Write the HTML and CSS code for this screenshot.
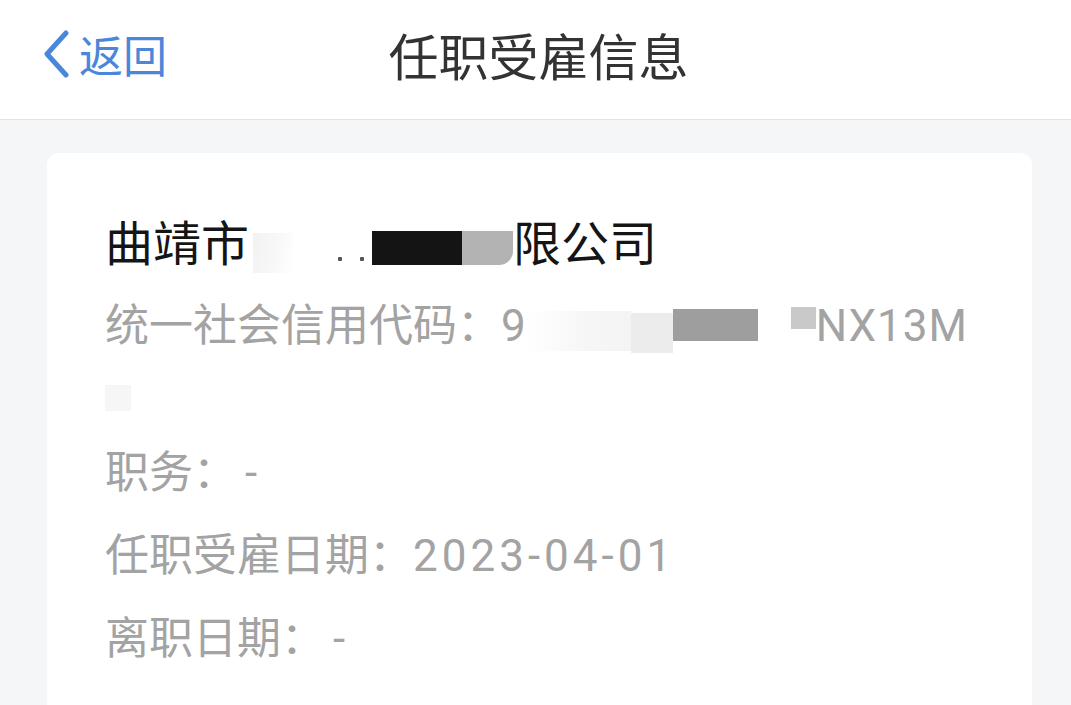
FILE: index.html
```html
<!DOCTYPE html>
<html lang="zh-CN">
<head>
<meta charset="utf-8">
<title>任职受雇信息</title>
<link rel="stylesheet" href="styles.css">
</head>
<body>
<header class="topbar">
  <div class="back">
    <svg class="chev" width="28" height="48" viewBox="0 0 28 48"><path d="M23 3 L4 24 L23 45" fill="none" stroke="#4a87da" stroke-width="5" stroke-linecap="round" stroke-linejoin="round"/></svg>
    <span class="back-text">返回</span>
  </div>
  <h1 class="title">任职受雇信息</h1>
  <div class="spacer"></div>
</header>
<main class="content">
  <section class="card">
    <div class="company">曲靖市<span class="rd smear"></span><span class="rd gap45"></span><span class="rd dot"></span><span class="rd gap18"></span><span class="rd dot"></span><span class="rd gap8"></span><span class="rd black"></span><span class="rd grey1"></span>限公司</div>
    <div class="item code"><span class="label">统一社会信用代码：</span><span class="val">9<span class="rd fade"></span><span class="rd light"></span><span class="rd mid"></span><span class="rd gap33"></span><span class="rd pale"></span>NX13M<br><span class="rd faint"></span></span></div>
    <div class="item"><span class="label">职务：</span><span class="val dash">-</span></div>
    <div class="item"><span class="label">任职受雇日期：</span><span class="val date">2023-04-01</span></div>
    <div class="item"><span class="label">离职日期：</span><span class="val dash">-</span></div>
  </section>
</main>
</body>
</html>
```
FILE: styles.css
```css
html, body {
  margin: 0;
  padding: 0;
}
body {
  width: 1071px;
  height: 705px;
  overflow: hidden;
  background: #f5f6f8;
  font-family: "Roboto", "Noto Sans CJK SC", sans-serif;
}
.topbar {
  height: 120px;
  border-bottom: 1px solid #e4e4e6;
  background: #ffffff;
  display: grid;
  grid-template-columns: 1fr auto 1fr;
  align-items: center;
  padding-bottom: 12px;
  box-sizing: border-box;
}
.back {
  display: flex;
  align-items: center;
  padding-left: 43px;
  gap: 8px;
}
.chev {
  display: block;
}
.back-text {
  font-family: "Noto Sans CJK SC", sans-serif;
  font-size: 44px;
  color: #4a87da;
  line-height: 60px;
}
.title {
  margin: 0;
  font-family: "Noto Sans CJK SC", sans-serif;
  font-weight: 400;
  font-size: 50px;
  line-height: 60px;
  color: #333333;
  padding-left: 6px;
}
.content {
  padding: 33px 39px 0 47px;
}
.card {
  background: #ffffff;
  border-radius: 12px 12px 0 0;
  padding: 57px 58px 0 58px;
  box-sizing: border-box;
  height: 552px;
}
.company {
  font-family: "Noto Sans CJK SC", sans-serif;
  font-size: 48px;
  line-height: 60px;
  color: #151515;
  margin-bottom: 17px;
  white-space: nowrap;
}
.item {
  font-size: 44px;
  line-height: 64px;
  color: #a3a3a3;
  margin-bottom: 15px;
}
.label {
  font-family: "Noto Sans CJK SC", sans-serif;
}
.val {
  letter-spacing: 1px;
}
.val.date {
  letter-spacing: 4px;
}
.val.dash {
  padding-left: 8px;
}
.rd {
  display: inline-block;
  vertical-align: -4px;
  height: 34px;
}
.smear {
  width: 40px;
  margin-left: 4px;
  height: 40px;
  vertical-align: -12px;
  background: linear-gradient(100deg, #f2f2f2 0%, #f7f7f7 50%, #ffffff 100%);
}
.gap45 { width: 45px; }
.gap18 { width: 18px; }
.gap8 { width: 8px; }
.gap33 { width: 33px; }
.dot {
  width: 4px;
  height: 4px;
  vertical-align: 0;
  background: #555555;
  border-radius: 1px;
}
.black {
  width: 90px;
  background: #141414;
}
.grey1 {
  width: 51px;
  background: #b3b3b3;
  border-radius: 0 0 14px 0;
}
.fade {
  width: 104px;
  height: 40px;
  vertical-align: -10px;
  background: linear-gradient(90deg, #ffffff 0%, #f6f6f6 60%, #f4f4f4 100%);
}
.light {
  width: 42px;
  height: 40px;
  vertical-align: -12px;
  background: #ececec;
}
.mid {
  width: 85px;
  height: 32px;
  vertical-align: 0;
  background: #9e9e9e;
}
.pale {
  width: 25px;
  height: 22px;
  vertical-align: 12px;
  background: #c9c9c9;
}
.faint {
  width: 26px;
  height: 26px;
  vertical-align: -6px;
  background: #f6f6f6;
}
```
